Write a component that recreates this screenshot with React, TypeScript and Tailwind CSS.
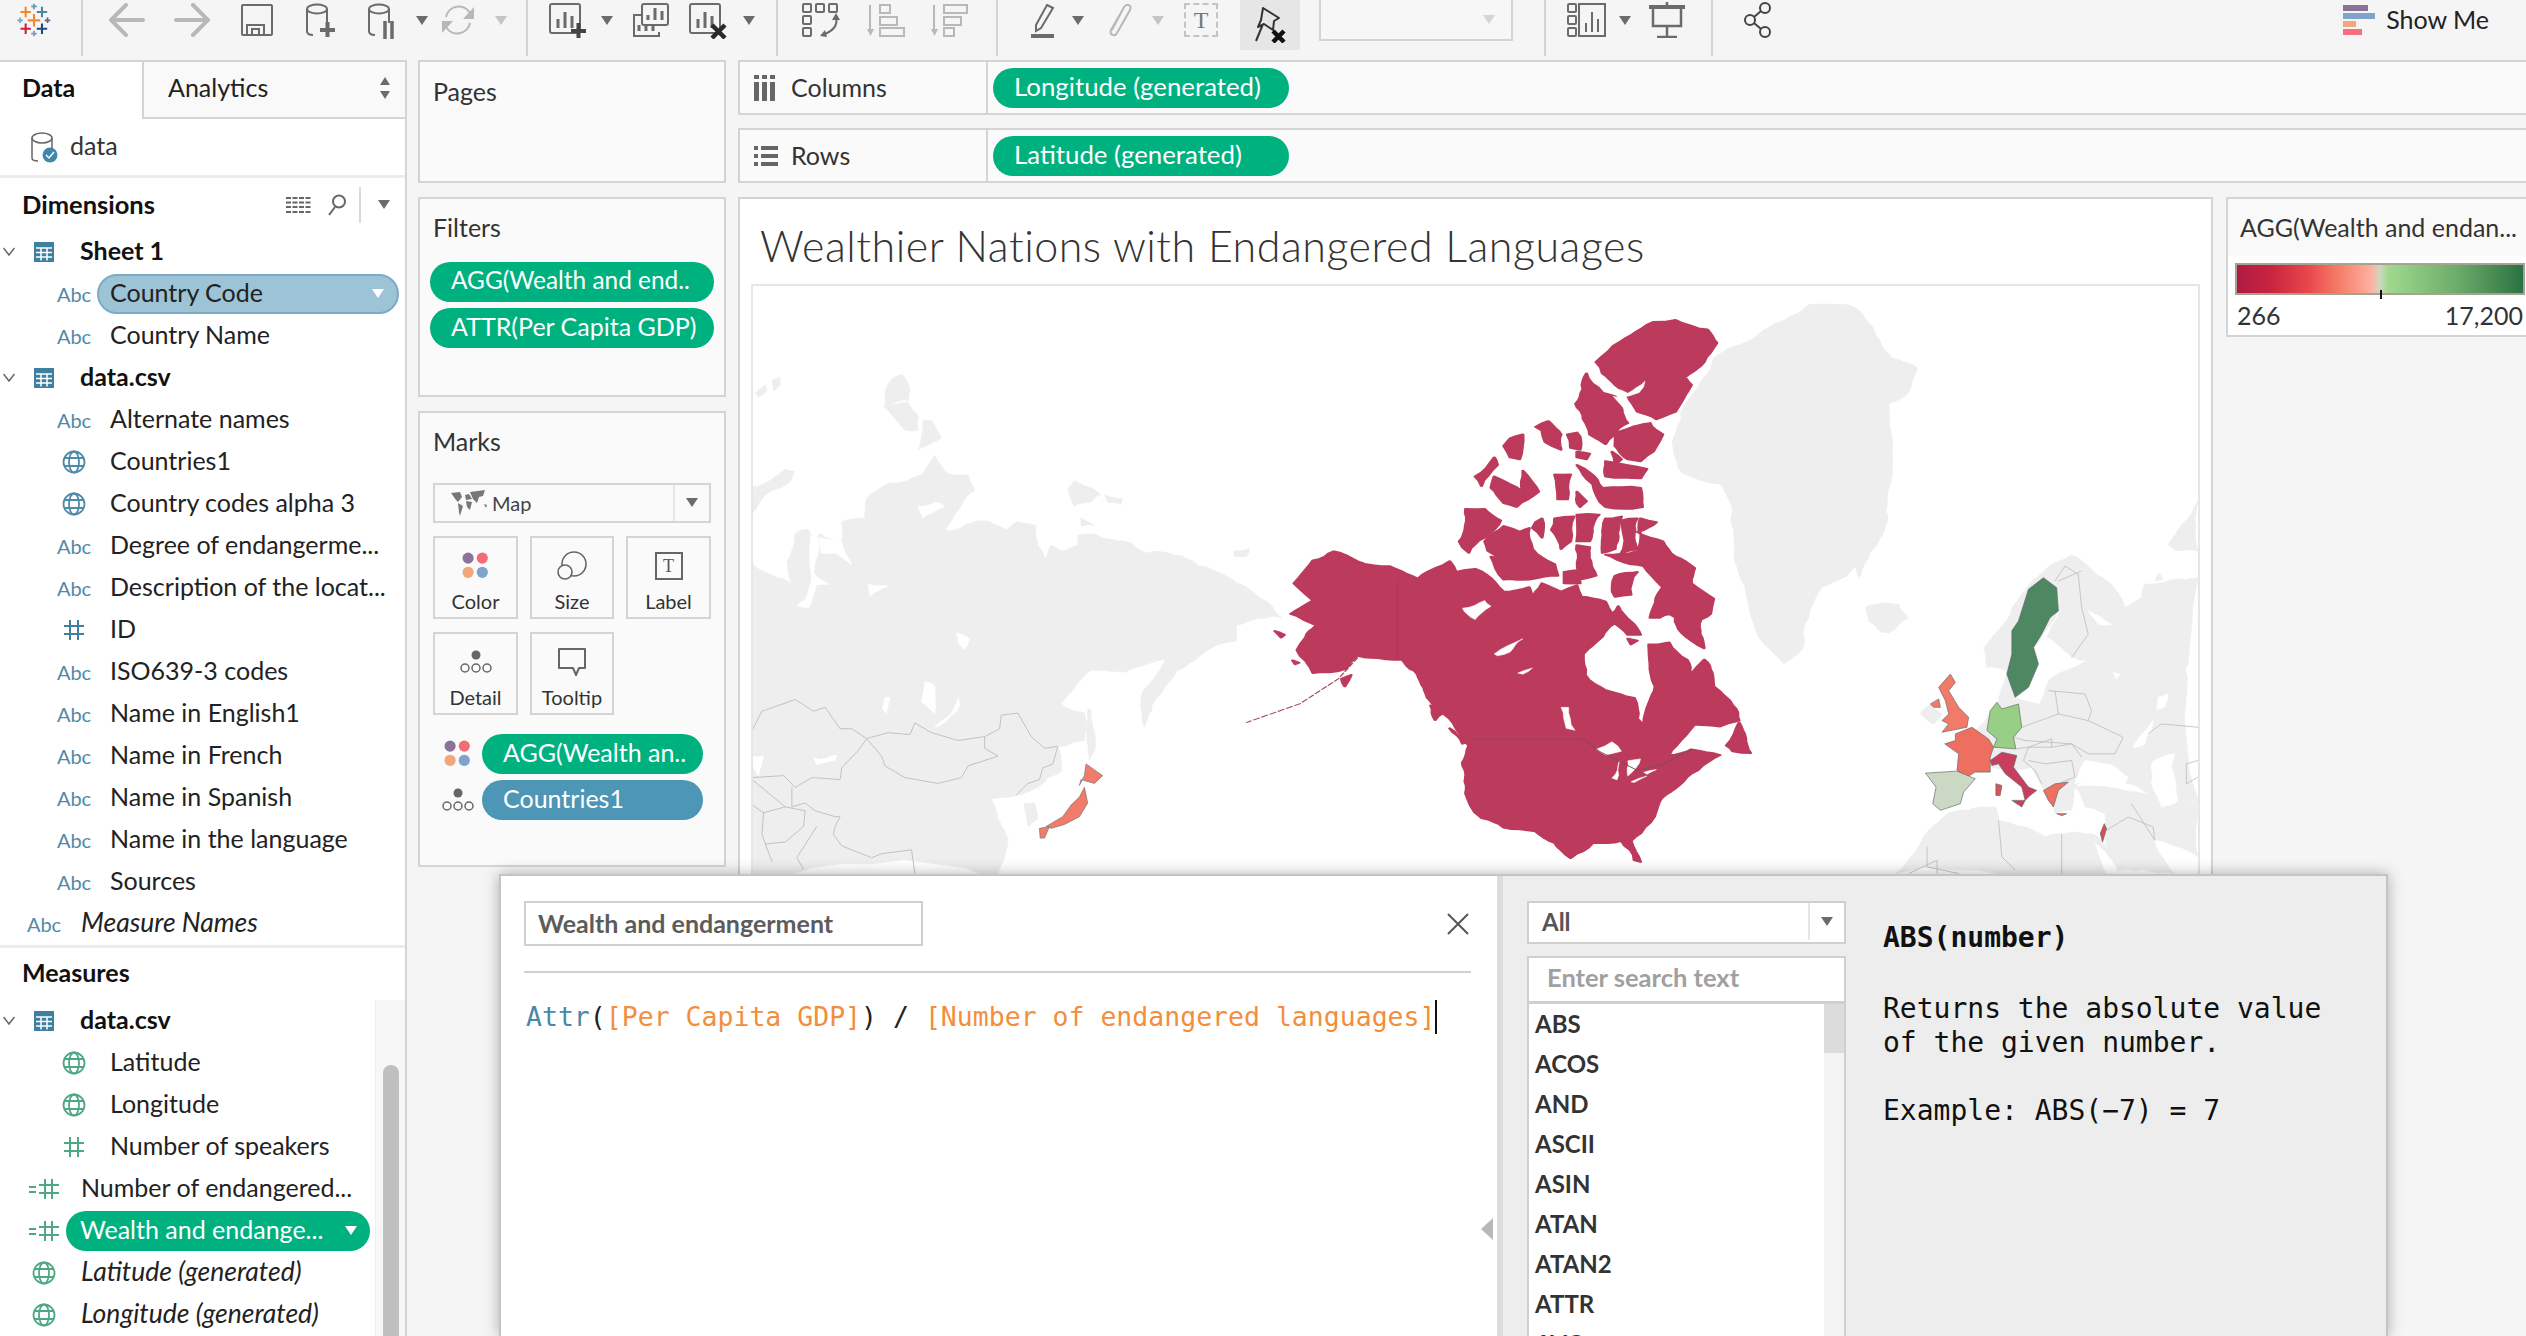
import React from 'react';

const LAND = '#eeeeee';
const RED = '#bc3a5c';

// traced shapes, numbers are in the coordinates of three crops of the map
const asiaLand = [
  '30,745 60,765 150,800 135,740 160,670 200,660 215,700 235,670 300,690 300,640 370,630 375,580 450,540 540,520 580,470 610,510 680,520 700,560 640,620 610,660 700,640 800,660 830,640 885,650 890,700 915,735 930,700 960,715 1010,700 1010,675 1060,670 1130,690 1221,720 1374,753 1488,797 1563,838 1623,886 1488,904 1488,945 1278,993 1200,1011 1150,1025 1050,1020 990,1075 960,1105 1030,1130 1040,1160 1030,1200 950,1215 960,1280 920,1295 830,1340 750,1350 780,1420 800,1450 790,1500 760,1558 30,1558',
  '10,560 60,545 130,505 158,510 150,530 80,565 40,610 10,630',
  '430,310 445,280 480,262 505,300 500,330 430,345',
  '425,345 450,340 500,335 530,370 530,405 490,405 450,365',
  '545,380 570,380 600,425 530,455',
  '980,555 1000,535 1040,550 1080,570 1050,590 1000,600',
  '1090,570 1145,580 1140,595 1100,590',
  '1020,630 1060,650 1020,650',
  '90,280 115,270 115,290 95,305',
  '40,310 70,290 75,305 50,320',
  '850,1360 880,1360 890,1400 860,1420',
  '1040,1120 1050,1120 1065,1210 1045,1250 1038,1200',
];
const asiaHoles = [
  '205,680 230,680 215,770 262,800 225,800 200,860 165,855 190,840 210,780',
  '235,680 300,690 330,750 280,720 240,720',
  '530,600 580,590 610,600 560,620 545,630',
  '645,925 685,940 670,968 650,950',
  '550,1050 580,1060 580,1130 540,1100',
  '650,1090 655,1110 620,1145 580,1165 630,1130',
  '430,1090 445,1090 435,1130 422,1120',
  '380,800 440,805 385,830',
  '215,1245 285,1238 280,1250 225,1262',
  '30,1240 65,1240 50,1290 30,1260',
];
const asiaBorders = [
  '30,1175 60,1125 160,1095 215,1125 250,1115 295,1170 330,1170 375,1195 440,1180 505,1185 520,1155 570,1180 650,1200 730,1190 775,1170 780,1135 830,1130 870,1190 910,1220 950,1215 935,1260 905,1270 895,1300 860,1310 825,1340',
  '375,1195 420,1240 430,1265 490,1295 590,1310 660,1295 680,1265 770,1240 730,1220 730,1190',
  '375,1195 350,1225 300,1270 295,1300 210,1295 160,1320 125,1290 30,1295',
  '30,1365 65,1385 60,1440 70,1465 90,1510',
  '65,1385 130,1370 190,1380 185,1420 130,1460 70,1465',
  '30,1300 130,1370',
  '150,1320 150,1370 190,1360 220,1380 280,1395 295,1395 280,1420 275,1440 300,1470 390,1500 420,1490 510,1480 520,1540',
  '225,1420 165,1500 185,1530',
];
const japan = [
  '1035,1260 1085,1290 1060,1310 1020,1300 1015,1315 1030,1290',
  '1030,1320 1040,1360 1015,1395 970,1415 930,1425 915,1420 965,1395 990,1365 1015,1345',
  '895,1425 925,1420 910,1450 897,1450',
];

const northGrey = [
  '1215,110 1270,60 1330,60 1370,120 1400,200 1440,225 1420,300 1395,320 1400,450 1390,600 1370,700 1330,770 1290,800 1260,960 1230,1000 1200,950 1170,800 1150,600 1130,530 1070,500 1055,420 1085,300 1120,200 1150,170',
  '1360,860 1410,845 1425,880 1395,920 1365,890',
  '365,705 390,700 385,720 368,720',
  '270,950 255,1000 230,1060 225,1165 250,1080 275,1020 330,960 370,935',
];
const northRed = [
  '460,790 490,730 523,706 560,732 610,745 645,770 655,778 695,742 705,732 715,760 745,752 775,785 790,812 830,800 835,835 850,790 880,812 905,795 912,825 950,838 960,870 970,850 990,890 1005,925 985,925 965,895 945,930 915,975 918,1030 950,1070 995,1090 1000,1145 1010,1160 1018,1105 1028,1060 1020,1000 1018,950 1050,945 1078,990 1085,1030 1105,990 1120,1060 1150,1110 1160,1150 1130,1165 1090,1160 1075,1190 1050,1240 1085,1225 1130,1240 1095,1280 1065,1320 1040,1350 1030,1385 1005,1445 990,1465 1005,1520 995,1515 975,1465 930,1470 895,1510 870,1470 840,1440 790,1430 755,1405 730,1340 725,1260 735,1215 715,1170 690,1120 670,1090 650,1020 630,990 580,985 560,980 540,1015 490,1025 465,965 495,900 455,870 490,835',
  '1160,1155 1178,1235 1150,1230 1140,1215',
  '720,680 730,595 760,595 785,625 760,670 735,710',
  '760,680 790,640 815,655 830,645 835,700 870,740 875,770 830,780 790,780 770,720 800,735 765,705',
  '840,630 850,620 850,670 835,645',
  '870,620 900,615 895,680 880,700 865,650',
  '905,610 940,610 925,680 905,680',
  '905,690 925,695 935,770 910,780',
  '950,620 975,615 965,700 945,710',
  '975,625 1000,620 1000,700 975,710',
  '1005,620 1030,630 1000,655 1040,680 1060,720 1090,750 1085,790 1120,830 1115,870 1100,885 1105,960 1070,920 1060,880 1050,870 1035,880 1020,880 1040,800 1010,745 990,740 950,715 1000,705',
  '985,935 1000,940 990,950',
  '965,770 1000,760 990,820 965,825',
  '885,760 910,755 910,790 885,790',
  '1025,105 1060,100 1110,125 1125,160 1105,210 1075,250 1085,270 1060,340 1030,360 1000,340 985,300 965,270 945,240 935,210 975,155 990,140',
  '920,240 945,290 965,300 985,370 970,385 950,425 925,400 915,360 903,320',
  '965,395 985,385 1020,370 1040,400 1025,445 1005,470 985,465 965,430',
  '840,380 860,365 880,400 880,440 855,420 850,390',
  '890,400 905,395 910,440 895,435',
  '800,410 820,400 815,465 800,460 790,430',
  '745,510 775,460 780,480 755,535',
  '775,510 820,550 820,495 845,550 810,590 790,580 770,540',
  '870,505 895,505 890,570 875,570',
  '905,480 925,500 945,540 1005,540 1008,590 950,590 930,530',
  '905,550 920,575 910,590',
  '950,470 1015,490 1005,515 950,510',
  '905,445 925,450 920,465 905,460',
  '960,445 975,465 965,480',
  '430,915 445,925 440,932',
  '458,992 468,998 462,1002',
  '535,1040 550,1030 540,1060',
  '675,1110 695,1130 682,1148',
  '705,1170 735,1205 725,1210',
];
const northLakes = [
  '725,855 760,835 770,850 745,885',
  '775,975 820,935 800,970 780,980',
  '880,1115 892,1115 902,1175 888,1170',
  '812,1025 835,1012 820,1028',
  '935,1225 960,1205 975,1230 950,1240',
  '960,1300 972,1255 968,1305',
  '985,1255 1005,1250 985,1295',
  '990,1310 1015,1295 995,1312',
  '1010,1285 1030,1278 1015,1290',
  '950,262 985,292 1012,260 1003,290 975,304 955,285',
  '962,300 975,305 992,335 978,330',
];

const europeLand = [
  '1020,230 930,240 860,250 850,290 800,320 760,250 700,205 640,160 580,190 500,270 450,350 375,440 385,500 445,510 420,590 380,660 350,690 380,720 400,800 520,800 560,870 590,940 640,930 650,860 700,830 810,850 870,880 900,900 1020,900',
  '110,1120 200,1000 260,945 330,930 410,920 420,960 500,980 560,1010 700,1000 730,1020 780,1120',
  '650,860 680,920 740,940 745,990 760,1120 950,1120 890,1020 1020,1070 1020,900 900,900',
  '20,320 110,310 145,345 110,385 70,395 40,360',
  '0,60 80,0 40,130 0,230',
  '930,130 1020,0 1020,150 960,150',
  '185,640 215,610 250,640 225,670',
  '905,215 915,235 890,240',
];
const europeHoles = [
  '600,335 570,380 530,440 540,490 510,560 470,590 540,610 570,540 640,500 680,480 640,470 605,440 565,410',
  '650,850 680,780 740,790 810,830 800,850 720,840',
  '880,790 950,760 940,800 960,900 910,920 880,850',
  '710,1030 780,1120 745,1120',
  '890,1020 1000,1090 950,1120',
  '900,590 930,580 920,620 895,625',
  '825,740 885,660 860,730',
  '690,330 730,350 760,370 720,370',
  '765,515 785,520 775,535',
  '985,500 998,490 990,530',
];
const europeBorders = [
  '640,470 690,400 670,320 660,220 620,195 590,240',
  '600,240 670,210',
  '490,680 600,640 690,660 795,710 770,760 690,760 640,730 500,720 465,710',
  '570,570 630,575 680,580 700,630 690,660',
  '600,640 590,570',
  '472,745 510,740 580,715 580,740 510,740 495,780 530,810 550,850',
  '580,740 640,730 670,770',
  '510,780 560,790 640,780 650,830 610,845',
  '870,700 910,670 1020,680',
  '420,960 430,1070 470,1110',
  '610,1000 610,1120',
  '820,910 890,1020 885,980 810,950 745,990',
  '205,1040 205,1100 300,1120',
  '150,1120 235,1080 235,1120',
  '1020,780 985,790 985,850 1020,830',
];
const europeFilled: [string, string][] = [
  ['#4d8863', '555,230 595,260 600,330 575,350 550,400 525,440 540,490 510,560 470,590 445,520 460,460 460,390 480,360 510,265'],
  ['#96cf85', '415,605 430,625 480,610 490,680 465,710 472,745 405,740 415,715 385,690 395,630'],
  ['#ed6f60', '340,680 390,715 405,740 395,770 395,815 350,815 325,830 295,810 300,760 258,730 290,720 290,700'],
  ['#cbd8c3', '200,818 295,812 350,835 315,875 305,910 245,930 222,910 232,860'],
  ['#f27a68', '275,520 290,545 270,570 300,620 330,650 325,680 250,695 270,670 250,660 270,640 260,600 240,560'],
  ['#f27a68', '215,610 240,595 245,620 225,620'],
  ['#c93e5c', '395,780 430,755 475,765 465,800 510,860 535,870 515,885 500,900 490,860 440,820 420,790 400,795'],
  ['#c93e5c', '460,900 500,900 490,920'],
  ['#d9525c', '412,850 430,855 425,885 412,885'],
  ['#ed7163', '555,870 590,850 630,845 600,870 585,920 570,900'],
  ['#ed7163', '595,940 625,940 610,946'],
  ['#d94d58', '738,970 745,985 733,1025 726,1000'],
];

// breaks long straight edges up so traced coastlines look like coastlines
function rough(points: string) {
  let pts = points.split(' ').map((p) => p.split(',').map(Number));
  for (let pass = 0; pass < 3; pass++) {
    const next: number[][] = [];
    pts.forEach((a, i) => {
      const b = pts[(i + 1) % pts.length];
      const dx = b[0] - a[0];
      const dy = b[1] - a[1];
      const len = Math.hypot(dx, dy);
      next.push(a);
      if (len > 18) {
        const n = Math.sin(a[0] * 12.9898 + a[1] * 78.233) * 43758.5453;
        const k = (n - Math.floor(n) - 0.5) * 0.16;
        next.push([(a[0] + b[0]) / 2 - dy * k, (a[1] + b[1]) / 2 + dx * k]);
      }
    });
    pts = next;
  }
  return 'M' + pts.map((p) => `${p[0].toFixed(1)} ${p[1].toFixed(1)}`).join('L') + 'Z';
}

function Shapes({ items, fill, grow = 2 }: { items: string[]; fill: string; grow?: number }) {
  return (
    <>
      {items.map((p, i) => (
        <path key={i} d={rough(p)} fill={fill} stroke={fill} strokeWidth={grow} strokeLinejoin="round" />
      ))}
    </>
  );
}

function Lines({ items }: { items: string[] }) {
  return (
    <>
      {items.map((p, i) => (
        <polyline key={i} points={p} fill="none" stroke="#bdbdbd" strokeWidth="2.5" />
      ))}
    </>
  );
}

function WorldMap() {
  return (
    <svg viewBox="751 285 1449 600" className="block w-full h-[600px]">
      <g transform="translate(740 270) scale(0.3333 0.3916)">
        <Shapes items={asiaLand} fill={LAND} />
        <Shapes items={asiaHoles} fill="#ffffff" />
        <Lines items={asiaBorders} />
        {japan.map((p, i) => (
          <polygon key={i} points={p} fill="#f27c69" stroke="#777777" strokeWidth="2" strokeLinejoin="round" />
        ))}
      </g>
      <g transform="translate(1000 280) scale(0.6378 0.3827)">
        <Shapes items={northGrey} fill={LAND} />
        <Shapes items={northRed} fill={RED} grow={5} />
        <Shapes items={northLakes} fill="#ffffff" grow={1} />
        <polyline points="560,985 530,1040 470,1105 385,1155" fill="none" stroke="#a34560" strokeWidth="2.500" strokeDasharray="12 3" />
        <polyline points="735,1198 915,1198 940,1230 1000,1280 1040,1265 1085,1225" fill="none" stroke="#77505c" strokeWidth="2" />
        <line x1="623" y1="780" x2="623" y2="990" stroke="#ad3a58" strokeWidth="2" />
      </g>
      <g transform="translate(1860 500) scale(0.3333)">
        <Shapes items={europeLand} fill={LAND} />
        <Shapes items={europeHoles} fill="#ffffff" />
        <Lines items={europeBorders} />
        {europeFilled.map(([c, p], i) => (
          <polygon key={i} points={p} fill={c} stroke="#666666" strokeWidth="2" strokeLinejoin="round" />
        ))}
      </g>
    </svg>
  );
}

function Caret({ color = '#6b6b6b', w = 12 }: { color?: string; w?: number }) {
  return (
    <svg width={w} height={9} viewBox="0 0 12 9" className="shrink-0">
      <path d="M0 0h12L6 9z" fill={color} />
    </svg>
  );
}

const G = '#6b6b6b';
const D = '#b8b8b8';

function Logo() {
  const marks: [number, number, number, string][] = [
    [102, 60, 18, '#f08a2c'], [78, 36, 15, '#f08a2c'], [125, 36, 15, '#4e84a3'], [78, 84, 15, '#c8213f'], [125, 84, 15, '#1e4a80'],
    [102, 20, 8, '#5f9aae'], [62, 60, 8, '#7da7bd'], [141, 60, 8, '#5c6692'], [102, 98, 8, '#8296bd'],
  ];
  return (
    <svg width={34} height={34} viewBox="53 10 98 98" className="ml-[17px] shrink-0">
      {marks.map(([x, y, r, c], i) => (
        <path key={i} d={`M${x - r} ${y}H${x + r}M${x} ${y - r}V${y + r}`} stroke={c} strokeWidth={r > 10 ? 6 : 5} />
      ))}
    </svg>
  );
}

function Sep({ ml }: { ml: string }) {
  return <div className={`w-[2px] h-[56px] bg-[#d4d4d4] self-start shrink-0 ${ml}`} />;
}

function ChartBox({ x = 1, w = 30 }: { x?: number; w?: number }) {
  return (
    <>
      <rect x={x} y={3} width={w} height={29} rx={2} fill="none" stroke={G} strokeWidth="2" />
      <path d={`M${x + 8} 27v-9M${x + 15} 27V11M${x + 22} 27V15`} stroke={G} strokeWidth="3" fill="none" />
    </>
  );
}

function Cylinder({ children }: { children: React.ReactNode }) {
  return (
    <svg width={30} height={38} viewBox="0 0 30 38" className="shrink-0">
      <ellipse cx="11" cy="8" rx="10" ry="4.5" fill="none" stroke={G} strokeWidth="2" />
      <path d="M1 8v22c0 2.500 2 4 6 4M21 8v14" fill="none" stroke={G} strokeWidth="2" />
      {children}
    </svg>
  );
}

function Toolbar() {
  return (
    <div className="h-[60px] flex items-center bg-[#f5f5f5] pb-[20px] shrink-0 overflow-hidden">
      <Logo />
      <Sep ml="ml-[30px]" />
      <svg width={36} height={34} viewBox="0 0 36 34" className="ml-[26px] shrink-0">
        <path d="M34 17H3M17 2L2 17l15 15" fill="none" stroke={D} strokeWidth="4" strokeLinecap="round" />
      </svg>
      <svg width={36} height={34} viewBox="0 0 36 34" className="ml-[29px] shrink-0">
        <path d="M2 17h31M19 2l15 15-15 15" fill="none" stroke={D} strokeWidth="4" strokeLinecap="round" />
      </svg>
      <svg width={32} height={32} viewBox="0 0 32 32" className="ml-[31px] shrink-0">
        <rect x="1" y="1" width="30" height="30" rx="1" fill="none" stroke={G} strokeWidth="2" />
        <path d="M6 31V21h17v10M11 31v-6h7v6" fill="none" stroke={G} strokeWidth="2" />
      </svg>
      <div className="ml-[33px]">
        <Cylinder>
          <path d="M14 29h15M21.500 21v15" stroke={G} strokeWidth="4" />
        </Cylinder>
      </div>
      <div className="ml-[32px]">
        <Cylinder>
          <path d="M17 20v18M24 20v18" stroke={G} strokeWidth="3.500" />
        </Cylinder>
      </div>
      <div className="ml-[18px]">
        <Caret />
      </div>
      <svg width={34} height={34} viewBox="0 0 34 34" className="ml-[13px] shrink-0">
        <path d="M5 14A13 13 0 0 1 29 10M29 20A13 13 0 0 1 5 24" fill="none" stroke={D} strokeWidth="2" />
        <path d="M33 4v12H22zM1 30V18h11z" fill={D} />
      </svg>
      <div className="ml-[20px]">
        <Caret color="#c4c4c4" />
      </div>
      <Sep ml="ml-[19px]" />
      <svg width={38} height={38} viewBox="0 0 38 38" className="ml-[21px] shrink-0">
        <ChartBox />
        <path d="M22 30h15M29.500 22v15" stroke="#444444" strokeWidth="4" />
      </svg>
      <div className="ml-[14px]">
        <Caret />
      </div>
      <svg width={37} height={36} viewBox="0 0 37 36" className="ml-[19px] shrink-0">
        <path d="M9 13H2v21h25v-4" fill="none" stroke={G} strokeWidth="2" />
        <path d="M7 29v-6M14 29v-6M21 29v-6" stroke={G} strokeWidth="3" />
        <rect x="10" y="2" width="26" height="21" rx="2" fill="#f5f5f5" stroke={G} strokeWidth="2" />
        <path d="M16 18v-5M23 18V6M30 18V9" stroke={G} strokeWidth="3" />
      </svg>
      <svg width={38} height={38} viewBox="0 0 38 38" className="ml-[20px] shrink-0">
        <ChartBox />
        <path d="M23 24l13 13M36 24L23 37" stroke="#2a2a2a" strokeWidth="4.500" />
      </svg>
      <div className="ml-[16px]">
        <Caret />
      </div>
      <Sep ml="ml-[21px]" />
      <svg width={38} height={34} viewBox="0 0 38 34" className="ml-[24px] shrink-0">
        <g fill="none" stroke={G} strokeWidth="2">
          <rect x="1" y="1" width="8" height="8" rx="1" />
          <rect x="14" y="1" width="8" height="8" rx="1" />
          <rect x="27" y="1" width="8" height="8" rx="1" />
          <rect x="1" y="13" width="8" height="8" rx="1" />
          <rect x="1" y="25" width="8" height="8" rx="1" />
          <path d="M34 14c2 8-2 14-14 18" />
        </g>
        <path d="M30 17l4-7 4 7zM23 27l-5 6 7 1z" fill={G} />
      </svg>
      <svg width={38} height={34} viewBox="0 0 38 34" className="ml-[27px] shrink-0">
        <path d="M3 2v28" stroke={D} strokeWidth="2" />
        <path d="M0 26h7l-3.500 7z" fill={D} />
        <g fill="none" stroke={D} strokeWidth="2">
          <rect x="13" y="2" width="10" height="8" />
          <rect x="13" y="14" width="17" height="8" />
          <rect x="13" y="25" width="24" height="8" />
        </g>
      </svg>
      <svg width={37} height={34} viewBox="0 0 37 34" className="ml-[26px] shrink-0">
        <path d="M3 2v28" stroke={D} strokeWidth="2" />
        <path d="M0 26h7l-3.500 7z" fill={D} />
        <g fill="none" stroke={D} strokeWidth="2">
          <rect x="13" y="2" width="23" height="8" />
          <rect x="13" y="14" width="17" height="8" />
          <rect x="13" y="25" width="10" height="8" />
        </g>
      </svg>
      <Sep ml="ml-[28px]" />
      <svg width={24} height={36} viewBox="0 0 24 36" className="ml-[33px] shrink-0">
        <path d="M16 3l6 3-12 20-5 3 0-6z" fill="none" stroke={G} strokeWidth="2" />
        <rect x="0" y="32" width="23" height="4" fill={G} />
      </svg>
      <div className="ml-[17px]">
        <Caret />
      </div>
      <svg width={26} height={36} viewBox="0 0 26 36" className="ml-[23px] shrink-0">
        <path d="M5 28L17 5c3-4 8-2 6 3L10 31c-2 4-8 2-6-3L15 9" fill="none" stroke={D} strokeWidth="2" />
      </svg>
      <div className="ml-[19px]">
        <Caret color="#c4c4c4" />
      </div>
      <div className="ml-[20px] w-[34px] h-[34px] border-2 border-dashed border-[#c4c4c4] shrink-0 flex items-center justify-center text-[24px] leading-none text-[#777] font-['Liberation_Serif',serif]">
        T
      </div>
      <div className="ml-[22px] w-[60px] h-[50px] bg-[#e6e6e6] self-start shrink-0 flex items-center justify-center">
        <svg width={34} height={36} viewBox="0 0 34 36">
          <path d="M10 1l16 10-5 3-1 9-9-6-6 3 3-7z M10 17L3 34" fill="none" stroke="#333333" strokeWidth="2" strokeLinejoin="round" />
          <path d="M20 24l11 11M31 24L20 35" stroke="#111111" strokeWidth="4.500" />
        </svg>
      </div>
      <div className="ml-[19px] w-[194px] h-[41px] self-start shrink-0 bg-[#f7f7f7] border-2 border-t-0 border-[#d4d4d4] flex items-center justify-end pr-[16px]">
        <Caret color="#d4d4d4" />
      </div>
      <Sep ml="ml-[31px]" />
      <svg width={40} height={36} viewBox="0 0 40 36" className="ml-[21px] shrink-0">
        <g fill="none" stroke={G} strokeWidth="2">
          <rect x="1" y="2" width="8" height="8" rx="1" />
          <rect x="1" y="14" width="8" height="8" rx="1" />
          <rect x="1" y="26" width="8" height="8" rx="1" />
          <rect x="12" y="2" width="26" height="32" />
        </g>
        <path d="M19 30v-9M25 30V10M31 30V17" stroke={G} strokeWidth="2" />
      </svg>
      <div className="ml-[12px]">
        <Caret />
      </div>
      <svg width={36} height={36} viewBox="0 0 36 36" className="ml-[18px] shrink-0">
        <path d="M0 5h36" stroke={G} strokeWidth="4" />
        <path d="M4 6v18h28V6M18 0v5M18 24v11M8 35h20" fill="none" stroke={G} strokeWidth="2.500" />
      </svg>
      <Sep ml="ml-[26px]" />
      <svg width={28} height={36} viewBox="0 0 28 36" className="ml-[31px] shrink-0">
        <g fill="none" stroke="#444444" strokeWidth="2">
          <circle cx="6" cy="18" r="5" />
          <circle cx="21" cy="6" r="5" />
          <circle cx="21" cy="30" r="5" />
          <path d="M10 15l7-6M10 21l7 6" />
        </g>
      </svg>
      <div className="ml-auto flex items-center gap-[11px] mr-[37px]">
        <div className="flex flex-col gap-[2px]">
          <div className="w-[25px] h-[6px] bg-[#8a7298]" />
          <div className="w-[32px] h-[6px] bg-[#7fa3cb]" />
          <div className="w-[13px] h-[6px] bg-[#f2a67a]" />
          <div className="w-[19px] h-[6px] bg-[#f56f80]" />
        </div>
        <span className="text-[25px] text-[#222]">Show Me</span>
      </div>
    </div>
  );
}

function Globe({ color }: { color: string }) {
  return (
    <svg width={24} height={24} viewBox="0 0 24 24" fill="none" stroke={color} strokeWidth="1.800" className="shrink-0">
      <circle cx="12" cy="12" r="10.500" />
      <ellipse cx="12" cy="12" rx="5" ry="10.500" />
      <path d="M2 8h20M2 16h20" />
    </svg>
  );
}

function Hash({ color }: { color: string }) {
  return (
    <svg width={20} height={22} viewBox="0 0 20 22" stroke={color} strokeWidth="2" className="shrink-0">
      <path d="M6 1v20M14 1v20M0 7h20M0 15h20" />
    </svg>
  );
}

function CalcHash() {
  return (
    <svg width={30} height={22} viewBox="0 0 30 22" stroke="#4fa884" strokeWidth="2" className="shrink-0">
      <path d="M0 9h7M0 14h7M16 1v20M23 1v20M10 7h20M10 15h20" />
    </svg>
  );
}

function TableIcon() {
  return (
    <svg width={20} height={20} viewBox="0 0 20 20" className="shrink-0">
      <rect x="0" y="0" width="20" height="20" fill="#3f7f9f" />
      <path d="M2 6h16M2 10.500h16M2 15h16M7 6v12.500M13 6v12.500" stroke="#ffffff" strokeWidth="1.500" />
    </svg>
  );
}

function Chevron() {
  return (
    <svg width={12} height={10} viewBox="0 0 12 10" fill="none" stroke="#666666" strokeWidth="1.500" className="shrink-0">
      <path d="M0.500 1l5.500 7 5.500-7" />
    </svg>
  );
}

type IconName = 'abc' | 'globe' | 'hash' | 'gglobe' | 'ghash' | 'calc';

function FieldIcon({ name }: { name: IconName }) {
  if (name === 'abc') return <span className="text-[20px] leading-none text-[#4f8aa8]">Abc</span>;
  if (name === 'globe') return <Globe color="#4f8aa8" />;
  if (name === 'gglobe') return <Globe color="#4fa884" />;
  if (name === 'hash') return <Hash color="#3f7f9f" />;
  if (name === 'ghash') return <Hash color="#4fa884" />;
  return <CalcHash />;
}

function FieldRow({ icon, label, indent = true, italic = false }: { icon: IconName; label: string; indent?: boolean; italic?: boolean }) {
  return (
    <div className="h-[42px] flex items-center whitespace-nowrap">
      <div className={`w-[32px] flex justify-center shrink-0 ${indent ? 'ml-[58px]' : 'ml-[28px]'}`}>
        <FieldIcon name={icon} />
      </div>
      <span className={`pb-[3px] text-[#222] ${indent ? 'ml-[20px]' : 'ml-[21px]'} ${italic ? 'italic text-[26.5px]' : 'text-[25px]'}`}>{label}</span>
    </div>
  );
}

function TableRow({ label }: { label: string }) {
  return (
    <div className="h-[42px] flex items-center">
      <div className="ml-[3px]">
        <Chevron />
      </div>
      <div className="ml-[19px]">
        <TableIcon />
      </div>
      <span className="ml-[26px] pb-[2px] text-[25px] font-bold text-[#111]">{label}</span>
    </div>
  );
}

function DataPane() {
  return (
    <div className="w-[407px] shrink-0 bg-white border-r-2 border-t-2 border-[#d4d4d4] flex flex-col">
      <div className="h-[57px] flex shrink-0">
        <div className="w-[142px] pl-[22px] pb-[5px] flex items-center text-[25px] font-bold text-[#111]">Data</div>
        <div className="flex-1 bg-[#f9f9f9] border-l-2 border-b-2 border-[#d4d4d4] flex items-center justify-between pl-[24px] pr-[15px] pb-[3px] text-[25px] text-[#222]">
          Analytics
          <svg width={10} height={22} viewBox="0 0 10 22" fill="#6b6b6b">
            <path d="M5 0l5 8H0zM5 22L0 14h10z" />
          </svg>
        </div>
      </div>
      <div className="h-[59px] flex items-center pl-[30px] shrink-0 border-b-[3px] border-[#ececec]">
        <svg width={30} height={32} viewBox="0 0 30 32" className="shrink-0">
          <ellipse cx="12" cy="7" rx="10" ry="5" fill="none" stroke="#666666" strokeWidth="1.500" />
          <path d="M2 7v20c0 2 2 3 6 3M22 7v10" fill="none" stroke="#666666" strokeWidth="1.500" />
          <circle cx="20" cy="24" r="7.500" fill="#3f88aa" />
          <path d="M16 24l3 3 5-6" fill="none" stroke="#ffffff" strokeWidth="1.500" />
        </svg>
        <span className="ml-[10px] pb-[3px] text-[25px] text-[#333]">data</span>
      </div>
      <div className="h-[53px] flex items-center pl-[22px] pr-[14px] shrink-0">
        <span className="text-[25.500px] font-bold text-[#111]">Dimensions</span>
        <svg width={26} height={18} viewBox="0 0 26 18" stroke="#666666" strokeWidth="2" strokeDasharray="5 1.500" className="ml-auto shrink-0">
          <path d="M0 2h26M0 6.500h26M0 11h26M0 16h26" />
        </svg>
        <svg width={18} height={22} viewBox="0 0 18 22" fill="none" stroke="#666666" strokeWidth="2" className="ml-[16px] shrink-0">
          <circle cx="11" cy="7.500" r="6" />
          <path d="M7 13L1 21" />
        </svg>
        <div className="w-[2px] h-[36px] bg-[#d9d9d9] ml-[13px]" />
        <div className="ml-[16px]">
          <Caret w={14} />
        </div>
      </div>
      <TableRow label="Sheet 1" />
      <div className="h-[42px] flex items-center">
        <div className="w-[32px] ml-[58px] flex justify-center">
          <FieldIcon name="abc" />
        </div>
        <div className="ml-[7px] w-[302px] h-[40px] rounded-full bg-[#9cc4d6] border-2 border-[#7cacc5] flex items-center justify-between pl-[11px] pr-[13px] pb-[2px] text-[25px] text-[#222]">
          Country Code
          <Caret color="#ffffff" />
        </div>
      </div>
      <FieldRow icon="abc" label="Country Name" />
      <TableRow label="data.csv" />
      <FieldRow icon="abc" label="Alternate names" />
      <FieldRow icon="globe" label="Countries1" />
      <FieldRow icon="globe" label="Country codes alpha 3" />
      <FieldRow icon="abc" label="Degree of endangerme..." />
      <FieldRow icon="abc" label="Description of the locat..." />
      <FieldRow icon="hash" label="ID" />
      <FieldRow icon="abc" label="ISO639-3 codes" />
      <FieldRow icon="abc" label="Name in English1" />
      <FieldRow icon="abc" label="Name in French" />
      <FieldRow icon="abc" label="Name in Spanish" />
      <FieldRow icon="abc" label="Name in the language" />
      <FieldRow icon="abc" label="Sources" />
      <FieldRow icon="abc" label="Measure Names" indent={false} italic />
      <div className="h-[55px] flex items-center pl-[22px] pb-[3px] border-t-[3px] border-[#ececec] text-[25px] font-bold text-[#111] shrink-0">Measures</div>
      <div className="flex flex-1">
        <div className="w-[375px] shrink-0">
          <TableRow label="data.csv" />
          <FieldRow icon="gglobe" label="Latitude" />
          <FieldRow icon="gglobe" label="Longitude" />
          <FieldRow icon="ghash" label="Number of speakers" />
          <FieldRow icon="calc" label="Number of endangered..." indent={false} />
          <div className="h-[42px] flex items-center">
            <div className="w-[32px] ml-[28px] flex justify-center">
              <CalcHash />
            </div>
            <div className="ml-[6px] w-[304px] h-[40px] rounded-full bg-[#00b180] flex items-center justify-between pl-[14px] pr-[13px] pb-[2px] text-[25px] text-white whitespace-nowrap">
              Wealth and endange...
              <Caret color="#ffffff" />
            </div>
          </div>
          <FieldRow icon="gglobe" label="Latitude (generated)" indent={false} italic />
          <FieldRow icon="gglobe" label="Longitude (generated)" indent={false} italic />
        </div>
        <div className="flex-1 bg-[#f7f7f7] border-l border-[#eeeeee] pt-[65px] pl-[7px]">
          <div className="w-[16px] h-full rounded-t-full bg-[#bfbfbf]" />
        </div>
      </div>
    </div>
  );
}

function Pill({ children, color = 'bg-[#00b180]', width, size = 'text-[25px]' }: { children: React.ReactNode; color?: string; width: string; size?: string }) {
  return (
    <div className={`h-[40px] rounded-full ${color} ${width} ${size} flex items-center pl-[21px] pb-[2px] text-white whitespace-nowrap shrink-0`}>
      {children}
    </div>
  );
}

function Card({ title, className, children }: { title: string; className: string; children?: React.ReactNode }) {
  return (
    <div className={`border-2 border-[#d4d4d4] bg-[#fafafa] px-[13px] shrink-0 ${className}`}>
      <div className="text-[25px] text-[#333]">{title}</div>
      {children}
    </div>
  );
}

function MarkButton({ label, width, children }: { label: string; width: string; children: React.ReactNode }) {
  return (
    <div className={`${width} h-[83px] border-2 border-[#d4d4d4] flex flex-col items-center pt-[11px] text-[20px] text-[#333] shrink-0`}>
      <div className="h-[34px] flex items-center">{children}</div>
      <span className="mt-[3px]">{label}</span>
    </div>
  );
}

function Dots({ size = 12 }: { size?: number }) {
  return (
    <svg width={size * 2.200} height={size * 2.200} viewBox="0 0 26 26" className="shrink-0">
      <circle cx="6" cy="6" r="5.500" fill="#8a7298" />
      <circle cx="20" cy="6" r="5.500" fill="#f26b76" />
      <circle cx="6" cy="20" r="5.500" fill="#f2a67a" />
      <circle cx="20" cy="20" r="5.500" fill="#7fa3cb" />
    </svg>
  );
}

function DetailDots() {
  return (
    <svg width={32} height={24} viewBox="0 0 32 24" className="shrink-0">
      <circle cx="16" cy="5" r="4.500" fill="#666666" />
      <g fill="none" stroke="#666666" strokeWidth="1.500">
        <circle cx="5" cy="18" r="4" />
        <circle cx="16" cy="18" r="4" />
        <circle cx="27" cy="18" r="4" />
      </g>
    </svg>
  );
}

function CardsColumn() {
  return (
    <div className="w-[308px] ml-[11px] shrink-0 flex flex-col">
      <Card title="Pages" className="h-[123px] pt-[11px]" />
      <Card title="Filters" className="h-[200px] mt-[14px] pt-[10px]">
        <div className="mt-[15px] -mx-[3px] flex flex-col gap-[6px]">
          <div className="h-[40px] rounded-full bg-[#00b180] flex items-center pl-[21px] pb-[2px] text-[24.400px] text-white whitespace-nowrap">AGG(Wealth and end..</div>
          <div className="h-[40px] rounded-full bg-[#00b180] flex items-center pl-[21px] pb-[2px] text-[25px] text-white whitespace-nowrap">ATTR(Per Capita GDP)</div>
        </div>
      </Card>
      <Card title="Marks" className="h-[456px] mt-[14px] pt-[10px]">
        <div className="mt-[22px] h-[40px] w-[278px] border-2 border-[#d4d4d4] flex items-center">
          <svg width={36} height={26} viewBox="0 0 36 26" fill="#777777" className="ml-[16px] shrink-0">
            <path d="M0 3l9-1 2 5-4 5-2-2zM7 13l5 3-3 10-1-4zM14 5l4-1 3 5-6 1zM15 11l6 1-2 8-3-3zM19 2l15-2-2 6-4 1-2 6-4-4zM33 14l3 1-1 3z" />
          </svg>
          <span className="ml-[5px] text-[20px] text-[#444]">Map</span>
          <div className="ml-auto w-[36px] h-full border-l-2 border-[#e6e6e6] flex items-center justify-center">
            <Caret />
          </div>
        </div>
        <div className="mt-[13px] flex flex-wrap gap-x-[12px] gap-y-[13px]">
          <MarkButton label="Color" width="w-[85px]">
            <Dots />
          </MarkButton>
          <MarkButton label="Size" width="w-[84px]">
            <svg width={30} height={30} viewBox="0 0 30 30" fill="none" stroke="#666666" strokeWidth="1.600">
              <circle cx="17" cy="13" r="12" />
              <circle cx="8" cy="21" r="7" fill="#fafafa" />
            </svg>
          </MarkButton>
          <MarkButton label="Label" width="w-[85px]">
            <div className="w-[28px] h-[28px] border-2 border-[#666] flex items-center justify-center text-[18px] leading-none text-[#555] font-['Liberation_Serif',serif]">T</div>
          </MarkButton>
          <MarkButton label="Detail" width="w-[85px]">
            <DetailDots />
          </MarkButton>
          <MarkButton label="Tooltip" width="w-[84px]">
            <svg width={30} height={30} viewBox="0 0 30 30" fill="none" stroke="#666666" strokeWidth="2">
              <path d="M2 2h26v19h-6l-3 7-3-7H2z" strokeLinejoin="round" />
            </svg>
          </MarkButton>
        </div>
        <div className="mt-[19px] flex flex-col gap-[6px]">
          <div className="flex items-center">
            <div className="w-[49px] flex justify-center">
              <Dots />
            </div>
            <Pill width="w-[221px]">AGG(Wealth an..</Pill>
          </div>
          <div className="flex items-center">
            <div className="w-[49px] flex justify-center">
              <DetailDots />
            </div>
            <Pill width="w-[221px]" color="bg-[#4d96b5]">Countries1</Pill>
          </div>
        </div>
      </Card>
    </div>
  );
}

function Shelf({ label, pill, icon }: { label: string; pill: string; icon: React.ReactNode }) {
  return (
    <div className="h-[55px] border-y-2 border-l-2 border-[#d4d4d4] bg-[#fafafa] flex items-center shrink-0">
      <div className="w-[248px] h-full border-r-2 border-[#d4d4d4] flex items-center pl-[14px] text-[25px] text-[#333] shrink-0">
        <div className="w-[37px]">{icon}</div>
        {label}
      </div>
      <div className="ml-[5px]">
        <Pill width="w-[296px]" size="text-[25.800px]">{pill}</Pill>
      </div>
    </div>
  );
}

function MainColumn() {
  return (
    <div className="flex-1 ml-[12px] min-w-0 flex flex-col">
      <Shelf
        label="Columns"
        pill="Longitude (generated)"
        icon={
          <svg width={22} height={26} viewBox="0 0 22 26" fill="#666666">
            <path d="M0 7h5v19H0zM8 7h5v19H8zM16 7h5v19h-5zM0 0h5v4H0zM8 0h5v4H8zM16 0h5v4h-5z" />
          </svg>
        }
      />
      <div className="mt-[13px]">
        <Shelf
          label="Rows"
          pill="Latitude (generated)"
          icon={
            <svg width={24} height={20} viewBox="0 0 24 20" fill="#666666">
              <path d="M0 0h4v4H0zM7 0h17v4H7zM0 8h4v4H0zM7 8h17v4H7zM0 16h4v4H0zM7 16h17v4H7z" />
            </svg>
          }
        />
      </div>
      <div className="mt-[14px] flex flex-1 min-h-0">
        <div className="w-[1475px] shrink-0 border-2 border-[#d4d4d4] bg-white flex flex-col overflow-hidden">
          <div className="h-[85px] pl-[20px] pt-[17px] text-[43px] font-light tracking-[0.5px] text-[#333] leading-[60px] whitespace-nowrap shrink-0">
            Wealthier Nations with Endangered Languages
          </div>
          <div className="ml-[11px] w-[1449px] border-2 border-[#e6e6e6] shrink-0">
            <WorldMap />
          </div>
        </div>
        <div className="ml-[13px] flex-1 h-[140px] border-2 border-r-0 border-[#d4d4d4] bg-white flex flex-col">
          <div className="h-[57px] bg-[#f9f9f9] flex items-center pl-[12px] text-[25px] text-[#333] whitespace-nowrap shrink-0">AGG(Wealth and endan...</div>
          <div className="relative ml-[7px] mr-[1px] mt-[7px] h-[32px] border-2 border-[#a3a293] bg-[linear-gradient(90deg,#b01a42,#c9253f_12%,#e8474c_25%,#f57a66_35%,#ffb0a0_47%,#cdd8c2_50%,#9fd98c_53%,#6aaa68_78%,#2a7244)] shrink-0">
            <div className="absolute left-[143px] top-[25px] w-[2px] h-[9px] bg-[#111]" />
          </div>
          <div className="flex justify-between pl-[9px] pr-[3px] mt-[5px] text-[25px] leading-[30px] text-[#333]">
            <span>266</span>
            <span>17,200</span>
          </div>
        </div>
      </div>
    </div>
  );
}

const functions = ['ABS', 'ACOS', 'AND', 'ASCII', 'ASIN', 'ATAN', 'ATAN2', 'ATTR', 'AVG'];

function CalcDialog() {
  return (
    <div className="absolute left-[499px] top-[874px] bottom-0 w-[1889px] flex bg-white border-t-2 border-l-2 border-r-2 border-[#c4c4c4] shadow-[0_0_14px_rgba(0,0,0,0.3)]">
      <div className="w-[996px] shrink-0 flex flex-col pl-[23px] pr-[26px] pt-[25px] relative">
        <div className="flex items-center justify-between shrink-0">
          <div className="w-[399px] h-[45px] border-2 border-[#cfcfcf] flex items-center pl-[12px] text-[25px] font-bold text-[#5c5c5c] whitespace-nowrap">
            Wealth and endangerment
          </div>
          <svg width={22} height={22} viewBox="0 0 22 22" stroke="#555555" strokeWidth="2" className="mr-[2px]">
            <path d="M1 1l20 20M21 1L1 21" />
          </svg>
        </div>
        <div className="h-[2px] bg-[#cfcfcf] mt-[25px] shrink-0" />
        <div className="mt-[27px] ml-[2px] flex items-center h-[34px] text-[26.5px] whitespace-pre font-['DejaVu_Sans_Mono',monospace]">
          <span className="text-[#4a87a8]">Attr</span>
          <span className="text-[#222]">(</span>
          <span className="text-[#f28e3c]">[Per Capita GDP]</span>
          <span className="text-[#222]">) / </span>
          <span className="text-[#f28e3c]">[Number of endangered languages]</span>
          <span className="w-[2px] h-[34px] bg-[#111]" />
        </div>
        <svg width={12} height={22} viewBox="0 0 12 22" fill="#b8b8b8" className="absolute right-[4px] top-[342px]">
          <path d="M12 0v22L0 11z" />
        </svg>
      </div>
      <div className="flex-1 bg-[#ededed] border-l-[6px] border-[#dcdcdc] flex pl-[24px] pt-[25px] min-w-0">
        <div className="w-[319px] shrink-0 flex flex-col">
          <div className="h-[43px] border-2 border-[#cfcfcf] bg-white flex items-center pb-[2px] shrink-0">
            <span className="ml-[13px] text-[24px] font-bold text-[#555]">All</span>
            <div className="ml-auto w-[36px] h-full border-l-2 border-[#e6e6e6] flex items-center justify-center">
              <Caret />
            </div>
          </div>
          <div className="mt-[12px] h-[48px] border-2 border-b-[3px] border-[#cfcfcf] bg-white flex items-center pl-[18px] pb-[5px] text-[25.500px] font-bold text-[#a0a0a0] shrink-0">
            Enter search text
          </div>
          <div className="flex-1 flex bg-white border-x-2 border-[#cfcfcf] min-h-0 overflow-hidden">
            <div className="flex-1 pl-[6px]">
              {functions.map((f) => (
                <div key={f} className="h-[40px] flex items-center text-[24px] font-bold text-[#333]">
                  {f}
                </div>
              ))}
            </div>
            <div className="w-[20px] bg-[#f4f4f4] shrink-0">
              <div className="h-[49px] bg-[#dcdcdc]" />
            </div>
          </div>
        </div>
        <div className="ml-[37px] pt-[20px] text-[28px] leading-[34px] text-[#111] whitespace-pre font-['DejaVu_Sans_Mono',monospace]">
          <div className="font-bold">ABS(number)</div>
          <div className="mt-[37px]">Returns the absolute value</div>
          <div>of the given number.</div>
          <div className="mt-[34px]">Example: ABS(−7) = 7</div>
        </div>
      </div>
    </div>
  );
}

export default function App() {
  return (
    <div className="relative h-[1336px] w-[2526px] overflow-hidden bg-[#f5f5f5] flex flex-col font-['Lato',sans-serif]">
      <Toolbar />
      <div className="flex flex-1 min-h-0">
        <DataPane />
        <CardsColumn />
        <MainColumn />
      </div>
      <CalcDialog />
    </div>
  );
}
